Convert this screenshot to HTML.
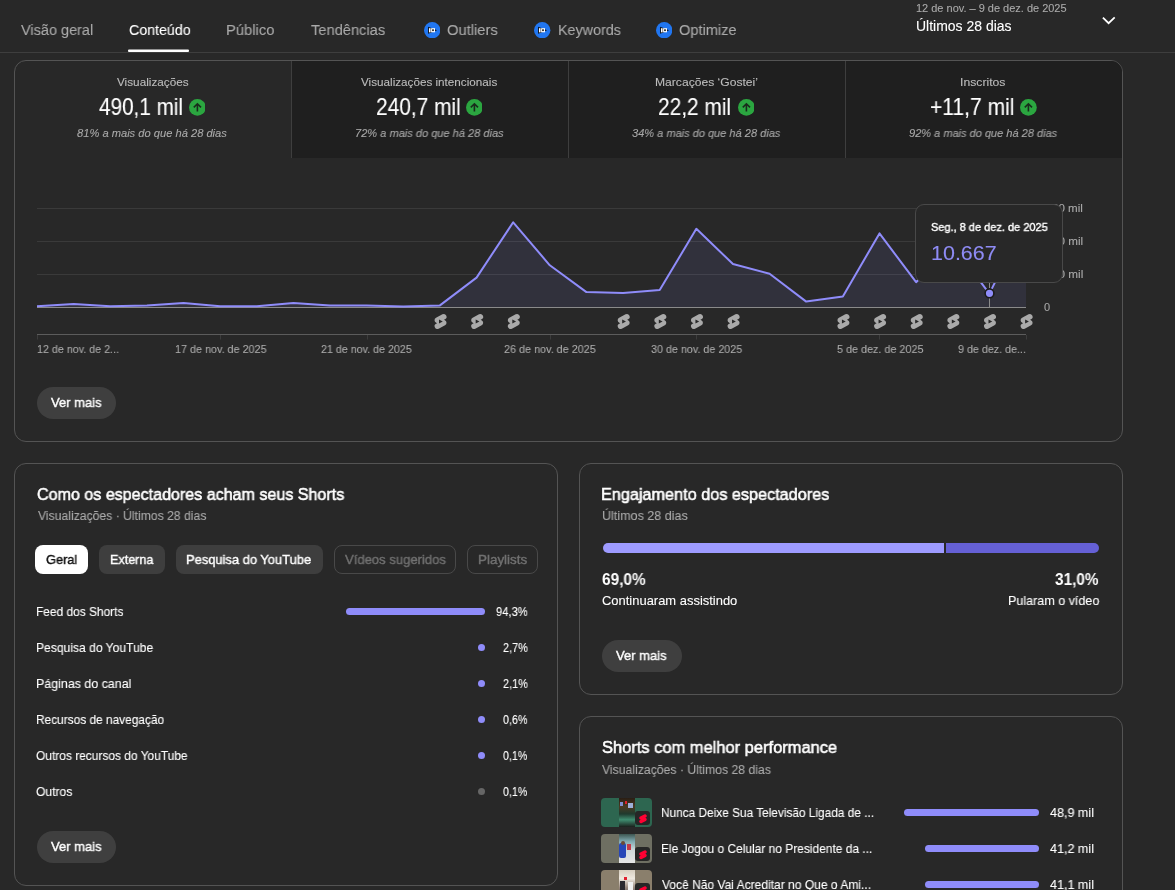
<!DOCTYPE html>
<html><head><meta charset="utf-8"><style>
html,body{margin:0;padding:0;width:1175px;height:890px;overflow:hidden;background:#282828;font-family:"Liberation Sans",sans-serif}
.a{position:absolute;box-sizing:border-box}
.t{position:absolute;white-space:nowrap;line-height:normal;transform-origin:0 0;will-change:transform}
</style></head><body>
<div class="a" style="left:0px;top:52px;width:1175px;height:1px;background:#3e3e3e"></div>
<svg class="a" style="left:0;top:0" width="300" height="60"><rect x="128" y="49.5" width="61" height="2.6" rx="1" fill="#fff"/></svg>
<svg class="a" style="left:423.8px;top:21.8px" width="16.4" height="16.4" viewBox="0 0 16.4 16.4"><circle cx="8.2" cy="8.2" r="8.2" fill="#2176f0"/><path d="M4.1 4.7 L13.1 8.3 L4.1 11.7 Z" fill="#111"/><rect x="5" y="6.2" width="1.6" height="4.2" fill="#fff"/><rect x="7.1" y="6.2" width="3.9" height="4.1" fill="#fff"/><rect x="8.2" y="7.3" width="1.6" height="1.8" fill="#111"/></svg>
<svg class="a" style="left:534.4px;top:21.8px" width="16.4" height="16.4" viewBox="0 0 16.4 16.4"><circle cx="8.2" cy="8.2" r="8.2" fill="#2176f0"/><path d="M4.1 4.7 L13.1 8.3 L4.1 11.7 Z" fill="#111"/><rect x="5" y="6.2" width="1.6" height="4.2" fill="#fff"/><rect x="7.1" y="6.2" width="3.9" height="4.1" fill="#fff"/><rect x="8.2" y="7.3" width="1.6" height="1.8" fill="#111"/></svg>
<svg class="a" style="left:655.8px;top:21.8px" width="16.4" height="16.4" viewBox="0 0 16.4 16.4"><circle cx="8.2" cy="8.2" r="8.2" fill="#2176f0"/><path d="M4.1 4.7 L13.1 8.3 L4.1 11.7 Z" fill="#111"/><rect x="5" y="6.2" width="1.6" height="4.2" fill="#fff"/><rect x="7.1" y="6.2" width="3.9" height="4.1" fill="#fff"/><rect x="8.2" y="7.3" width="1.6" height="1.8" fill="#111"/></svg>
<svg class="a" style="left:1101px;top:14px" width="16" height="12" viewBox="0 0 16 12"><path d="M1.9 3.6 L7.6 9.2 L13.7 3.4" stroke="#fff" stroke-width="1.8" fill="none"/></svg>
<div class="a" style="left:14px;top:60px;width:1109px;height:382px;border:1px solid #545454;border-radius:12px;overflow:hidden"></div>
<div class="a" style="left:292px;top:61px;width:830px;height:97px;background:#1f1f1f;border-top-right-radius:11px"></div>
<div class="a" style="left:291px;top:61px;width:1px;height:97px;background:#3e3e3e"></div>
<div class="a" style="left:568px;top:61px;width:1px;height:97px;background:#3e3e3e"></div>
<div class="a" style="left:845px;top:61px;width:1px;height:97px;background:#3e3e3e"></div>
<svg class="a" style="left:188.6px;top:99.4px" width="16.8" height="16.8" viewBox="0 0 16.8 16.8"><circle cx="8.4" cy="8.4" r="8.4" fill="#2ba640"/><path d="M8.4 12.4V5.2M4.8 8.4 L8.4 4.8 L12 8.4" stroke="#151515" stroke-opacity="0.85" stroke-width="1.6" fill="none"/></svg>
<svg class="a" style="left:465.6px;top:99.4px" width="16.8" height="16.8" viewBox="0 0 16.8 16.8"><circle cx="8.4" cy="8.4" r="8.4" fill="#2ba640"/><path d="M8.4 12.4V5.2M4.8 8.4 L8.4 4.8 L12 8.4" stroke="#151515" stroke-opacity="0.85" stroke-width="1.6" fill="none"/></svg>
<svg class="a" style="left:737.6px;top:99.4px" width="16.8" height="16.8" viewBox="0 0 16.8 16.8"><circle cx="8.4" cy="8.4" r="8.4" fill="#2ba640"/><path d="M8.4 12.4V5.2M4.8 8.4 L8.4 4.8 L12 8.4" stroke="#151515" stroke-opacity="0.85" stroke-width="1.6" fill="none"/></svg>
<svg class="a" style="left:1019.8px;top:99.4px" width="16.8" height="16.8" viewBox="0 0 16.8 16.8"><circle cx="8.4" cy="8.4" r="8.4" fill="#2ba640"/><path d="M8.4 12.4V5.2M4.8 8.4 L8.4 4.8 L12 8.4" stroke="#151515" stroke-opacity="0.85" stroke-width="1.6" fill="none"/></svg>
<svg class="a" style="left:0;top:0" width="1175" height="890" viewBox="0 0 1175 890"><line x1="37" y1="208.5" x2="1026" y2="208.5" stroke="#3a3a3a" stroke-width="1"/><line x1="37" y1="241.5" x2="1026" y2="241.5" stroke="#3a3a3a" stroke-width="1"/><line x1="37" y1="274.5" x2="1026" y2="274.5" stroke="#3a3a3a" stroke-width="1"/><polygon points="37,307.5 37.00,306.20 73.63,303.90 110.26,306.20 146.89,305.40 183.52,303.10 220.15,306.20 256.78,306.20 293.41,303.10 330.04,305.40 366.67,305.40 403.30,306.40 439.93,305.40 476.56,277.60 513.19,222.30 549.81,265.30 586.44,292.10 623.07,292.90 659.70,290.10 696.33,228.80 732.96,264.00 769.59,273.70 806.22,301.60 842.85,296.50 879.48,233.40 916.11,282.20 952.74,245.00 989.37,293.60 1026.00,220.00 1026,307.5" fill="#8d89f5" fill-opacity="0.10"/><line x1="37" y1="307.5" x2="1026" y2="307.5" stroke="#8a8a8a" stroke-width="1"/><polyline points="37.00,306.20 73.63,303.90 110.26,306.20 146.89,305.40 183.52,303.10 220.15,306.20 256.78,306.20 293.41,303.10 330.04,305.40 366.67,305.40 403.30,306.40 439.93,305.40 476.56,277.60 513.19,222.30 549.81,265.30 586.44,292.10 623.07,292.90 659.70,290.10 696.33,228.80 732.96,264.00 769.59,273.70 806.22,301.60 842.85,296.50 879.48,233.40 916.11,282.20 952.74,245.00 989.37,293.60 1026.00,220.00" fill="none" stroke="#8f8cfa" stroke-width="2" stroke-linejoin="round"/><line x1="37" y1="334.5" x2="1026" y2="334.5" stroke="#5c5c5c" stroke-width="1"/><line x1="37.5" y1="335" x2="37.5" y2="339.5" stroke="#3c3c3c" stroke-width="1"/><line x1="220.5" y1="335" x2="220.5" y2="339.5" stroke="#3c3c3c" stroke-width="1"/><line x1="367.5" y1="335" x2="367.5" y2="339.5" stroke="#3c3c3c" stroke-width="1"/><line x1="550.5" y1="335" x2="550.5" y2="339.5" stroke="#3c3c3c" stroke-width="1"/><line x1="696.5" y1="335" x2="696.5" y2="339.5" stroke="#3c3c3c" stroke-width="1"/><line x1="879.5" y1="335" x2="879.5" y2="339.5" stroke="#3c3c3c" stroke-width="1"/><line x1="1026.5" y1="335" x2="1026.5" y2="339.5" stroke="#3c3c3c" stroke-width="1"/><line x1="989.5" y1="280" x2="989.5" y2="307" stroke="#8a8a8a" stroke-width="1"/><circle cx="989.5" cy="293.3" r="4.4" fill="#8f8cfa" stroke="#1c1c1c" stroke-width="1.6"/><g transform="translate(431.53,312.50) scale(0.75)"><path d="M17.77 10.32l-1.2-.5L18 9.06a3.74 3.74 0 00-3.5-6.62L6 6.94a3.74 3.74 0 00.23 6.74l1.2.49L6 14.93a3.75 3.75 0 003.5 6.63l8.5-4.5a3.74 3.74 0 00-.23-6.74z" fill="#aaaaaa"/><path d="M10 14.65v-5.3L15 12l-5 2.65z" fill="#282828"/></g><g transform="translate(468.16,312.50) scale(0.75)"><path d="M17.77 10.32l-1.2-.5L18 9.06a3.74 3.74 0 00-3.5-6.62L6 6.94a3.74 3.74 0 00.23 6.74l1.2.49L6 14.93a3.75 3.75 0 003.5 6.63l8.5-4.5a3.74 3.74 0 00-.23-6.74z" fill="#aaaaaa"/><path d="M10 14.65v-5.3L15 12l-5 2.65z" fill="#282828"/></g><g transform="translate(504.79,312.50) scale(0.75)"><path d="M17.77 10.32l-1.2-.5L18 9.06a3.74 3.74 0 00-3.5-6.62L6 6.94a3.74 3.74 0 00.23 6.74l1.2.49L6 14.93a3.75 3.75 0 003.5 6.63l8.5-4.5a3.74 3.74 0 00-.23-6.74z" fill="#aaaaaa"/><path d="M10 14.65v-5.3L15 12l-5 2.65z" fill="#282828"/></g><g transform="translate(614.67,312.50) scale(0.75)"><path d="M17.77 10.32l-1.2-.5L18 9.06a3.74 3.74 0 00-3.5-6.62L6 6.94a3.74 3.74 0 00.23 6.74l1.2.49L6 14.93a3.75 3.75 0 003.5 6.63l8.5-4.5a3.74 3.74 0 00-.23-6.74z" fill="#aaaaaa"/><path d="M10 14.65v-5.3L15 12l-5 2.65z" fill="#282828"/></g><g transform="translate(651.30,312.50) scale(0.75)"><path d="M17.77 10.32l-1.2-.5L18 9.06a3.74 3.74 0 00-3.5-6.62L6 6.94a3.74 3.74 0 00.23 6.74l1.2.49L6 14.93a3.75 3.75 0 003.5 6.63l8.5-4.5a3.74 3.74 0 00-.23-6.74z" fill="#aaaaaa"/><path d="M10 14.65v-5.3L15 12l-5 2.65z" fill="#282828"/></g><g transform="translate(687.93,312.50) scale(0.75)"><path d="M17.77 10.32l-1.2-.5L18 9.06a3.74 3.74 0 00-3.5-6.62L6 6.94a3.74 3.74 0 00.23 6.74l1.2.49L6 14.93a3.75 3.75 0 003.5 6.63l8.5-4.5a3.74 3.74 0 00-.23-6.74z" fill="#aaaaaa"/><path d="M10 14.65v-5.3L15 12l-5 2.65z" fill="#282828"/></g><g transform="translate(724.56,312.50) scale(0.75)"><path d="M17.77 10.32l-1.2-.5L18 9.06a3.74 3.74 0 00-3.5-6.62L6 6.94a3.74 3.74 0 00.23 6.74l1.2.49L6 14.93a3.75 3.75 0 003.5 6.63l8.5-4.5a3.74 3.74 0 00-.23-6.74z" fill="#aaaaaa"/><path d="M10 14.65v-5.3L15 12l-5 2.65z" fill="#282828"/></g><g transform="translate(834.45,312.50) scale(0.75)"><path d="M17.77 10.32l-1.2-.5L18 9.06a3.74 3.74 0 00-3.5-6.62L6 6.94a3.74 3.74 0 00.23 6.74l1.2.49L6 14.93a3.75 3.75 0 003.5 6.63l8.5-4.5a3.74 3.74 0 00-.23-6.74z" fill="#aaaaaa"/><path d="M10 14.65v-5.3L15 12l-5 2.65z" fill="#282828"/></g><g transform="translate(871.08,312.50) scale(0.75)"><path d="M17.77 10.32l-1.2-.5L18 9.06a3.74 3.74 0 00-3.5-6.62L6 6.94a3.74 3.74 0 00.23 6.74l1.2.49L6 14.93a3.75 3.75 0 003.5 6.63l8.5-4.5a3.74 3.74 0 00-.23-6.74z" fill="#aaaaaa"/><path d="M10 14.65v-5.3L15 12l-5 2.65z" fill="#282828"/></g><g transform="translate(907.71,312.50) scale(0.75)"><path d="M17.77 10.32l-1.2-.5L18 9.06a3.74 3.74 0 00-3.5-6.62L6 6.94a3.74 3.74 0 00.23 6.74l1.2.49L6 14.93a3.75 3.75 0 003.5 6.63l8.5-4.5a3.74 3.74 0 00-.23-6.74z" fill="#aaaaaa"/><path d="M10 14.65v-5.3L15 12l-5 2.65z" fill="#282828"/></g><g transform="translate(944.34,312.50) scale(0.75)"><path d="M17.77 10.32l-1.2-.5L18 9.06a3.74 3.74 0 00-3.5-6.62L6 6.94a3.74 3.74 0 00.23 6.74l1.2.49L6 14.93a3.75 3.75 0 003.5 6.63l8.5-4.5a3.74 3.74 0 00-.23-6.74z" fill="#aaaaaa"/><path d="M10 14.65v-5.3L15 12l-5 2.65z" fill="#282828"/></g><g transform="translate(980.97,312.50) scale(0.75)"><path d="M17.77 10.32l-1.2-.5L18 9.06a3.74 3.74 0 00-3.5-6.62L6 6.94a3.74 3.74 0 00.23 6.74l1.2.49L6 14.93a3.75 3.75 0 003.5 6.63l8.5-4.5a3.74 3.74 0 00-.23-6.74z" fill="#aaaaaa"/><path d="M10 14.65v-5.3L15 12l-5 2.65z" fill="#282828"/></g><g transform="translate(1017.60,312.50) scale(0.75)"><path d="M17.77 10.32l-1.2-.5L18 9.06a3.74 3.74 0 00-3.5-6.62L6 6.94a3.74 3.74 0 00.23 6.74l1.2.49L6 14.93a3.75 3.75 0 003.5 6.63l8.5-4.5a3.74 3.74 0 00-.23-6.74z" fill="#aaaaaa"/><path d="M10 14.65v-5.3L15 12l-5 2.65z" fill="#282828"/></g></svg>
<div class="a" style="left:915.3px;top:204px;width:147.6px;height:79px;background:#282828;border:1px solid #494949;border-radius:9px;z-index:5"></div>
<div class="a" style="left:37px;top:387px;width:79px;height:32px;background:#3f3f3f;border-radius:16px"></div>
<div class="a" style="left:14px;top:463px;width:544px;height:423px;border:1px solid #545454;border-radius:12px"></div>
<div class="a" style="left:35.4px;top:545px;width:52.3px;height:29px;background:#fff;border-radius:8px"></div>
<div class="a" style="left:99.4px;top:545px;width:65.4px;height:29px;background:#3e3e3e;border-radius:8px"></div>
<div class="a" style="left:176.2px;top:545px;width:146.6px;height:29px;background:#3e3e3e;border-radius:8px"></div>
<div class="a" style="left:334px;top:545px;width:122px;height:29px;border:1px solid #494949;border-radius:8px"></div>
<div class="a" style="left:467px;top:545px;width:71px;height:29px;border:1px solid #494949;border-radius:8px"></div>
<div class="a" style="left:346px;top:607.8px;width:139px;height:7.4px;background:#8f8cfa;border-radius:4px"></div>
<div class="a" style="left:478px;top:644.0px;width:7px;height:7px;background:#8f8cfa;border-radius:50%"></div>
<div class="a" style="left:478px;top:680.0px;width:7px;height:7px;background:#8f8cfa;border-radius:50%"></div>
<div class="a" style="left:478px;top:716.0px;width:7px;height:7px;background:#8f8cfa;border-radius:50%"></div>
<div class="a" style="left:478px;top:752.0px;width:7px;height:7px;background:#8f8cfa;border-radius:50%"></div>
<div class="a" style="left:478px;top:788.0px;width:7px;height:7px;background:#666;border-radius:50%"></div>
<div class="a" style="left:37px;top:831px;width:79px;height:32px;background:#3f3f3f;border-radius:16px"></div>
<div class="a" style="left:579px;top:463px;width:544px;height:232px;border:1px solid #545454;border-radius:12px"></div>
<div class="a" style="left:603px;top:543px;width:341px;height:10px;background:#9e9bff;border-radius:5px 0 0 5px"></div>
<div class="a" style="left:946px;top:543px;width:153px;height:10px;background:#6560d5;border-radius:0 5px 5px 0"></div>
<div class="a" style="left:602px;top:640px;width:80px;height:32px;background:#3f3f3f;border-radius:16px"></div>
<div class="a" style="left:579px;top:716px;width:544px;height:200px;border:1px solid #545454;border-radius:12px"></div>
<div class="a" style="left:601px;top:798.0px;width:51px;height:29px;border-radius:4px;overflow:hidden;background:#2d6650"><div class="a" style="left:18px;top:0;width:15.5px;height:29px;background:linear-gradient(180deg,#2a1e14 0%,#4a3a22 30%,#1f3a2e 55%,#3f8d70 75%,#1a1f1c 100%);overflow:hidden"><div class="a" style="left:1px;top:4px;width:3px;height:4px;background:#7f8fd0"></div><div class="a" style="left:9px;top:5px;width:5px;height:5px;background:#9fb0d8"></div><div class="a" style="left:6px;top:3px;width:2px;height:3px;background:#e0202a"></div></div><div class="a" style="left:34px;top:13px;width:15px;height:14px;background:#262626;border-radius:3px"></div><svg class="a" style="left:37.5px;top:16px" width="8" height="9.5" viewBox="3.5 1.5 17 21" preserveAspectRatio="none"><path d="M17.77 10.32l-1.2-.5L18 9.06a3.74 3.74 0 00-3.5-6.62L6 6.94a3.74 3.74 0 00.23 6.74l1.2.49L6 14.93a3.75 3.75 0 003.5 6.63l8.5-4.5a3.74 3.74 0 00-.23-6.74z" fill="#ff0033"/></svg></div>
<div class="a" style="left:601px;top:834.0px;width:51px;height:29px;border-radius:4px;overflow:hidden;background:#6e6f62"><div class="a" style="left:18px;top:0;width:15.5px;height:29px;background:linear-gradient(180deg,#3d5550 0%,#7fa9b0 25%,#cfd8da 55%,#e6e6e6 100%);overflow:hidden"><div class="a" style="left:0;top:9px;width:7px;height:15px;background:#2747b8;border-radius:2px"></div><div class="a" style="left:2px;top:7px;width:4px;height:4px;background:#6b4a36;border-radius:50%"></div><div class="a" style="left:8px;top:10px;width:4px;height:6px;background:#c33a4a"></div></div><div class="a" style="left:34px;top:13px;width:15px;height:14px;background:#262626;border-radius:3px"></div><svg class="a" style="left:37.5px;top:16px" width="8" height="9.5" viewBox="3.5 1.5 17 21" preserveAspectRatio="none"><path d="M17.77 10.32l-1.2-.5L18 9.06a3.74 3.74 0 00-3.5-6.62L6 6.94a3.74 3.74 0 00.23 6.74l1.2.49L6 14.93a3.75 3.75 0 003.5 6.63l8.5-4.5a3.74 3.74 0 00-.23-6.74z" fill="#ff0033"/></svg></div>
<div class="a" style="left:601px;top:870.0px;width:51px;height:29px;border-radius:4px;overflow:hidden;background:#8a7f6c"><div class="a" style="left:18px;top:0;width:15.5px;height:29px;background:linear-gradient(180deg,#d8cfc0 0%,#efe9e0 30%,#9a8a80 60%,#3a3a40 100%);overflow:hidden"><div class="a" style="left:5px;top:7px;width:3px;height:3px;background:#e02030"></div><div class="a" style="left:1px;top:11px;width:5px;height:10px;background:#2a2a30"></div><div class="a" style="left:9px;top:12px;width:5px;height:9px;background:#f0f0f0"></div></div><div class="a" style="left:34px;top:13px;width:15px;height:14px;background:#262626;border-radius:3px"></div><svg class="a" style="left:37.5px;top:16px" width="8" height="9.5" viewBox="3.5 1.5 17 21" preserveAspectRatio="none"><path d="M17.77 10.32l-1.2-.5L18 9.06a3.74 3.74 0 00-3.5-6.62L6 6.94a3.74 3.74 0 00.23 6.74l1.2.49L6 14.93a3.75 3.75 0 003.5 6.63l8.5-4.5a3.74 3.74 0 00-.23-6.74z" fill="#ff0033"/></svg></div>
<div class="a" style="left:904.2px;top:809.0px;width:134.89999999999986px;height:7.2px;background:#8f8cfa;border-radius:4px"></div>
<div class="a" style="left:924.9px;top:845.0px;width:114.19999999999993px;height:7.2px;background:#8f8cfa;border-radius:4px"></div>
<div class="a" style="left:924.9px;top:881.0px;width:114.19999999999993px;height:7.2px;background:#8f8cfa;border-radius:4px"></div>
<div class="t" style="left:21.00px;top:21.20px;font-size:15.14px;color:#aaaaaa;font-weight:normal;-webkit-text-stroke:0.1px currentColor;font-style:normal;transform:scaleX(0.9580);">Visão geral</div>
<div class="t" style="left:128.99px;top:21.10px;font-size:15.14px;color:#ffffff;font-weight:normal;-webkit-text-stroke:0.1px currentColor;font-style:normal;transform:scaleX(0.9401);">Conteúdo</div>
<div class="t" style="left:226.42px;top:21.10px;font-size:15.14px;color:#aaaaaa;font-weight:normal;-webkit-text-stroke:0.1px currentColor;font-style:normal;transform:scaleX(0.9750);">Público</div>
<div class="t" style="left:310.91px;top:21.10px;font-size:15.14px;color:#aaaaaa;font-weight:normal;-webkit-text-stroke:0.1px currentColor;font-style:normal;transform:scaleX(0.9692);">Tendências</div>
<div class="t" style="left:447.31px;top:21.00px;font-size:15.14px;color:#aaaaaa;font-weight:normal;-webkit-text-stroke:0.1px currentColor;font-style:normal;transform:scaleX(0.9745);">Outliers</div>
<div class="t" style="left:557.55px;top:21.00px;font-size:15.14px;color:#aaaaaa;font-weight:normal;-webkit-text-stroke:0.1px currentColor;font-style:normal;transform:scaleX(0.9474);">Keywords</div>
<div class="t" style="left:679.12px;top:21.00px;font-size:15.14px;color:#aaaaaa;font-weight:normal;-webkit-text-stroke:0.1px currentColor;font-style:normal;transform:scaleX(0.9645);">Optimize</div>
<div class="t" style="left:915.83px;top:1.60px;font-size:10.86px;color:#aaaaaa;font-weight:normal;-webkit-text-stroke:0.1px currentColor;font-style:normal;transform:scaleX(1.0109);">12 de nov. – 9 de dez. de 2025</div>
<div class="t" style="left:915.62px;top:18.50px;font-size:13.71px;color:#ffffff;font-weight:normal;-webkit-text-stroke:0.1px currentColor;font-style:normal;transform:scaleX(1.0200);">Últimos 28 dias</div>
<div class="t" style="left:117.00px;top:76.00px;font-size:11.43px;color:#bdbdbd;font-weight:normal;-webkit-text-stroke:0.1px currentColor;font-style:normal;transform:scaleX(1.0283);">Visualizações</div>
<div class="t" style="left:99.49px;top:94.00px;font-size:23.29px;color:#ffffff;font-weight:normal;-webkit-text-stroke:0.1px currentColor;font-style:normal;transform:scaleX(0.8900);">490,1 mil</div>
<div class="t" style="left:77.38px;top:126.70px;font-size:11.14px;color:#aaaaaa;font-weight:normal;-webkit-text-stroke:0.1px currentColor;font-style:italic;transform:scaleX(1.0012);">81% a mais do que há 28 dias</div>
<div class="t" style="left:361.20px;top:76.00px;font-size:11.43px;color:#bdbdbd;font-weight:normal;-webkit-text-stroke:0.1px currentColor;font-style:normal;transform:scaleX(1.0235);">Visualizações intencionais</div>
<div class="t" style="left:375.75px;top:94.00px;font-size:23.29px;color:#ffffff;font-weight:normal;-webkit-text-stroke:0.1px currentColor;font-style:normal;transform:scaleX(0.8978);">240,7 mil</div>
<div class="t" style="left:354.79px;top:126.70px;font-size:11.14px;color:#aaaaaa;font-weight:normal;-webkit-text-stroke:0.1px currentColor;font-style:italic;transform:scaleX(0.9937);">72% a mais do que há 28 dias</div>
<div class="t" style="left:655.03px;top:76.00px;font-size:11.43px;color:#bdbdbd;font-weight:normal;-webkit-text-stroke:0.1px currentColor;font-style:normal;transform:scaleX(1.0598);">Marcações ‘Gostei’</div>
<div class="t" style="left:658.36px;top:94.00px;font-size:23.29px;color:#ffffff;font-weight:normal;-webkit-text-stroke:0.1px currentColor;font-style:normal;transform:scaleX(0.8969);">22,2 mil</div>
<div class="t" style="left:631.98px;top:126.70px;font-size:11.14px;color:#aaaaaa;font-weight:normal;-webkit-text-stroke:0.1px currentColor;font-style:italic;transform:scaleX(0.9911);">34% a mais do que há 28 dias</div>
<div class="t" style="left:960.10px;top:76.00px;font-size:11.43px;color:#bdbdbd;font-weight:normal;-webkit-text-stroke:0.1px currentColor;font-style:normal;transform:scaleX(1.0684);">Inscritos</div>
<div class="t" style="left:930.06px;top:94.00px;font-size:23.29px;color:#ffffff;font-weight:normal;-webkit-text-stroke:0.1px currentColor;font-style:normal;transform:scaleX(0.9040);">+11,7 mil</div>
<div class="t" style="left:909.17px;top:126.70px;font-size:11.14px;color:#aaaaaa;font-weight:normal;-webkit-text-stroke:0.1px currentColor;font-style:italic;transform:scaleX(0.9898);">92% a mais do que há 28 dias</div>
<div class="t" style="left:37.15px;top:343.00px;font-size:11.57px;color:#aaaaaa;font-weight:normal;-webkit-text-stroke:0.1px currentColor;font-style:normal;transform:scaleX(0.9270);">12 de nov. de 2...</div>
<div class="t" style="left:174.94px;top:343.00px;font-size:11.57px;color:#aaaaaa;font-weight:normal;-webkit-text-stroke:0.1px currentColor;font-style:normal;transform:scaleX(0.9331);">17 de nov. de 2025</div>
<div class="t" style="left:321.47px;top:343.00px;font-size:11.57px;color:#aaaaaa;font-weight:normal;-webkit-text-stroke:0.1px currentColor;font-style:normal;transform:scaleX(0.9247);">21 de nov. de 2025</div>
<div class="t" style="left:503.76px;top:343.00px;font-size:11.57px;color:#aaaaaa;font-weight:normal;-webkit-text-stroke:0.1px currentColor;font-style:normal;transform:scaleX(0.9350);">26 de nov. de 2025</div>
<div class="t" style="left:651.08px;top:343.00px;font-size:11.57px;color:#aaaaaa;font-weight:normal;-webkit-text-stroke:0.1px currentColor;font-style:normal;transform:scaleX(0.9297);">30 de nov. de 2025</div>
<div class="t" style="left:837.07px;top:343.00px;font-size:11.57px;color:#aaaaaa;font-weight:normal;-webkit-text-stroke:0.1px currentColor;font-style:normal;transform:scaleX(0.9340);">5 de dez. de 2025</div>
<div class="t" style="left:958.27px;top:343.00px;font-size:11.57px;color:#aaaaaa;font-weight:normal;-webkit-text-stroke:0.1px currentColor;font-style:normal;transform:scaleX(0.9269);">9 de dez. de...</div>
<div class="t" style="left:1044.48px;top:301.00px;font-size:11.14px;color:#aaaaaa;font-weight:normal;-webkit-text-stroke:0.1px currentColor;font-style:normal;transform:scaleX(0.9709);">0</div>
<div class="t" style="left:1052.15px;top:202.20px;font-size:11.43px;color:#aaaaaa;font-weight:normal;-webkit-text-stroke:0.1px currentColor;font-style:normal;transform:scaleX(1.0124);">30 mil</div>
<div class="t" style="left:1051.92px;top:235.20px;font-size:11.43px;color:#aaaaaa;font-weight:normal;-webkit-text-stroke:0.1px currentColor;font-style:normal;transform:scaleX(1.0203);">20 mil</div>
<div class="t" style="left:1051.68px;top:268.20px;font-size:11.43px;color:#aaaaaa;font-weight:normal;-webkit-text-stroke:0.1px currentColor;font-style:normal;transform:scaleX(1.0283);">10 mil</div>
<div class="t" style="left:51.10px;top:395.10px;font-size:13.14px;color:#ffffff;font-weight:normal;-webkit-text-stroke:0.4px currentColor;font-style:normal;transform:scaleX(0.9897);">Ver mais</div>
<div class="t" style="left:930.56px;top:220.90px;font-size:11.43px;color:#ffffff;font-weight:normal;-webkit-text-stroke:0.4px currentColor;font-style:normal;transform:scaleX(0.9626);z-index:6">Seg., 8 de dez. de 2025</div>
<div class="t" style="left:931.30px;top:241.20px;font-size:20.71px;color:#8f8cf5;font-weight:normal;-webkit-text-stroke:0.1px currentColor;font-style:normal;transform:scaleX(1.0371);z-index:6">10.667</div>
<div class="t" style="left:36.80px;top:485.40px;font-size:16.57px;color:#ffffff;font-weight:normal;-webkit-text-stroke:0.55px currentColor;font-style:normal;transform:scaleX(0.9702);">Como os espectadores acham seus Shorts</div>
<div class="t" style="left:37.60px;top:508.00px;font-size:13.29px;color:#aaaaaa;font-weight:normal;-webkit-text-stroke:0.1px currentColor;font-style:normal;transform:scaleX(0.9172);">Visualizações · Últimos 28 dias</div>
<div class="t" style="left:46.26px;top:552.40px;font-size:13.43px;color:#0f0f0f;font-weight:normal;-webkit-text-stroke:0.4px currentColor;font-style:normal;transform:scaleX(0.9542);">Geral</div>
<div class="t" style="left:109.59px;top:552.40px;font-size:13.43px;color:#ffffff;font-weight:normal;-webkit-text-stroke:0.4px currentColor;font-style:normal;transform:scaleX(0.9390);">Externa</div>
<div class="t" style="left:186.37px;top:552.40px;font-size:13.43px;color:#ffffff;font-weight:normal;-webkit-text-stroke:0.4px currentColor;font-style:normal;transform:scaleX(0.9615);">Pesquisa do YouTube</div>
<div class="t" style="left:345.00px;top:552.20px;font-size:13.43px;color:#717171;font-weight:normal;-webkit-text-stroke:0.4px currentColor;font-style:normal;transform:scaleX(0.9732);">Vídeos sugeridos</div>
<div class="t" style="left:477.53px;top:552.20px;font-size:13.43px;color:#717171;font-weight:normal;-webkit-text-stroke:0.4px currentColor;font-style:normal;transform:scaleX(0.9963);">Playlists</div>
<div class="t" style="left:35.65px;top:604.20px;font-size:12.86px;color:#ffffff;font-weight:normal;-webkit-text-stroke:0.1px currentColor;font-style:normal;transform:scaleX(0.9264);">Feed dos Shorts</div>
<div class="t" style="left:495.85px;top:604.20px;font-size:12.86px;color:#ffffff;font-weight:normal;-webkit-text-stroke:0.1px currentColor;font-style:normal;transform:scaleX(0.8686);">94,3%</div>
<div class="t" style="left:35.63px;top:640.20px;font-size:12.86px;color:#ffffff;font-weight:normal;-webkit-text-stroke:0.1px currentColor;font-style:normal;transform:scaleX(0.9401);">Pesquisa do YouTube</div>
<div class="t" style="left:502.76px;top:640.20px;font-size:12.86px;color:#ffffff;font-weight:normal;-webkit-text-stroke:0.1px currentColor;font-style:normal;transform:scaleX(0.8447);">2,7%</div>
<div class="t" style="left:35.61px;top:676.20px;font-size:12.86px;color:#ffffff;font-weight:normal;-webkit-text-stroke:0.1px currentColor;font-style:normal;transform:scaleX(0.9666);">Páginas do canal</div>
<div class="t" style="left:502.76px;top:676.20px;font-size:12.86px;color:#ffffff;font-weight:normal;-webkit-text-stroke:0.1px currentColor;font-style:normal;transform:scaleX(0.8447);">2,1%</div>
<div class="t" style="left:35.65px;top:712.20px;font-size:12.86px;color:#ffffff;font-weight:normal;-webkit-text-stroke:0.1px currentColor;font-style:normal;transform:scaleX(0.9235);">Recursos de navegação</div>
<div class="t" style="left:503.08px;top:712.20px;font-size:12.86px;color:#ffffff;font-weight:normal;-webkit-text-stroke:0.1px currentColor;font-style:normal;transform:scaleX(0.8336);">0,6%</div>
<div class="t" style="left:36.12px;top:748.20px;font-size:12.86px;color:#ffffff;font-weight:normal;-webkit-text-stroke:0.1px currentColor;font-style:normal;transform:scaleX(0.9287);">Outros recursos do YouTube</div>
<div class="t" style="left:503.28px;top:748.20px;font-size:12.86px;color:#ffffff;font-weight:normal;-webkit-text-stroke:0.1px currentColor;font-style:normal;transform:scaleX(0.8266);">0,1%</div>
<div class="t" style="left:36.12px;top:784.20px;font-size:12.86px;color:#ffffff;font-weight:normal;-webkit-text-stroke:0.1px currentColor;font-style:normal;transform:scaleX(0.9392);">Outros</div>
<div class="t" style="left:503.28px;top:784.20px;font-size:12.86px;color:#ffffff;font-weight:normal;-webkit-text-stroke:0.1px currentColor;font-style:normal;transform:scaleX(0.8266);">0,1%</div>
<div class="t" style="left:51.10px;top:839.10px;font-size:13.14px;color:#ffffff;font-weight:normal;-webkit-text-stroke:0.4px currentColor;font-style:normal;transform:scaleX(0.9897);">Ver mais</div>
<div class="t" style="left:601.10px;top:485.20px;font-size:16.57px;color:#ffffff;font-weight:normal;-webkit-text-stroke:0.55px currentColor;font-style:normal;transform:scaleX(0.9800);">Engajamento dos espectadores</div>
<div class="t" style="left:601.52px;top:508.00px;font-size:13.29px;color:#aaaaaa;font-weight:normal;-webkit-text-stroke:0.1px currentColor;font-style:normal;transform:scaleX(0.9439);">Últimos 28 dias</div>
<div class="t" style="left:602.14px;top:570.70px;font-size:15.71px;color:#ffffff;font-weight:bold;font-style:normal;transform:scaleX(0.9823);">69,0%</div>
<div class="t" style="left:602.25px;top:592.50px;font-size:12.86px;color:#ffffff;font-weight:normal;-webkit-text-stroke:0.1px currentColor;font-style:normal;transform:scaleX(1.0069);">Continuaram assistindo</div>
<div class="t" style="left:1055.49px;top:570.70px;font-size:15.71px;color:#ffffff;font-weight:bold;font-style:normal;transform:scaleX(0.9788);">31,0%</div>
<div class="t" style="left:1007.90px;top:592.50px;font-size:12.86px;color:#ffffff;font-weight:normal;-webkit-text-stroke:0.1px currentColor;font-style:normal;transform:scaleX(0.9756);">Pularam o vídeo</div>
<div class="t" style="left:616.10px;top:648.10px;font-size:13.14px;color:#ffffff;font-weight:normal;-webkit-text-stroke:0.4px currentColor;font-style:normal;transform:scaleX(0.9897);">Ver mais</div>
<div class="t" style="left:601.74px;top:738.00px;font-size:16.57px;color:#ffffff;font-weight:normal;-webkit-text-stroke:0.55px currentColor;font-style:normal;transform:scaleX(0.9940);">Shorts com melhor performance</div>
<div class="t" style="left:602.40px;top:761.90px;font-size:13.29px;color:#aaaaaa;font-weight:normal;-webkit-text-stroke:0.1px currentColor;font-style:normal;transform:scaleX(0.9199);">Visualizações · Últimos 28 dias</div>
<div class="t" style="left:661.15px;top:805.10px;font-size:12.86px;color:#ffffff;font-weight:normal;-webkit-text-stroke:0.1px currentColor;font-style:normal;transform:scaleX(0.9208);">Nunca Deixe Sua Televisão Ligada de ...</div>
<div class="t" style="left:1049.55px;top:805.10px;font-size:12.86px;color:#ffffff;font-weight:normal;-webkit-text-stroke:0.1px currentColor;font-style:normal;transform:scaleX(0.9756);">48,9 mil</div>
<div class="t" style="left:661.14px;top:841.10px;font-size:12.86px;color:#ffffff;font-weight:normal;-webkit-text-stroke:0.1px currentColor;font-style:normal;transform:scaleX(0.9295);">Ele Jogou o Celular no Presidente da ...</div>
<div class="t" style="left:1049.55px;top:841.10px;font-size:12.86px;color:#ffffff;font-weight:normal;-webkit-text-stroke:0.1px currentColor;font-style:normal;transform:scaleX(0.9756);">41,2 mil</div>
<div class="t" style="left:662.10px;top:877.10px;font-size:12.86px;color:#ffffff;font-weight:normal;-webkit-text-stroke:0.1px currentColor;font-style:normal;transform:scaleX(0.9352);">Você Não Vai Acreditar no Que o Ami...</div>
<div class="t" style="left:1049.55px;top:877.10px;font-size:12.86px;color:#ffffff;font-weight:normal;-webkit-text-stroke:0.1px currentColor;font-style:normal;transform:scaleX(0.9756);">41,1 mil</div>
</body></html>
